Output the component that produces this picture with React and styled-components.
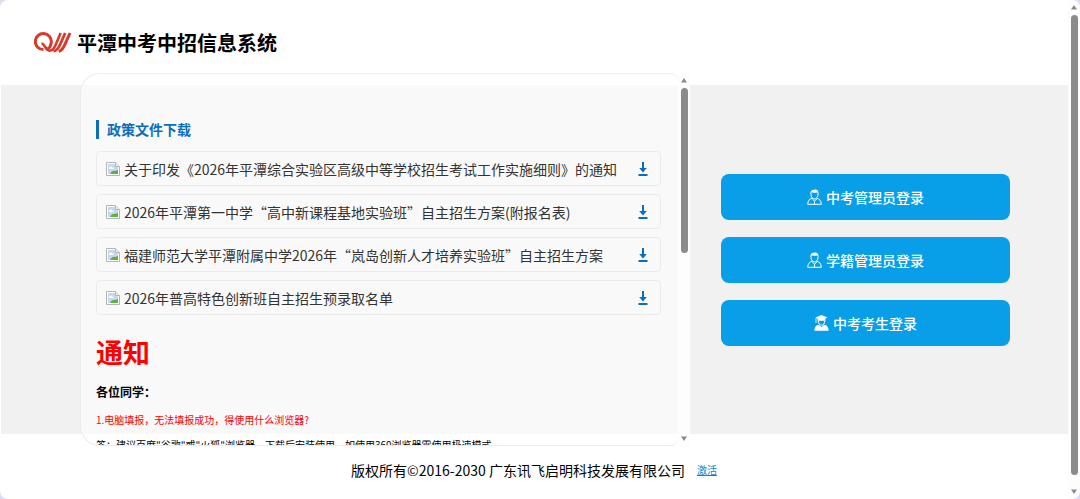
import React from 'react'
import styled, { createGlobalStyle } from 'styled-components'

const files = [
  '关于印发《2026年平潭综合实验区高级中等学校招生考试工作实施细则》的通知',
  '2026年平潭第一中学“高中新课程基地实验班”自主招生方案(附报名表)',
  '福建师范大学平潭附属中学2026年“岚岛创新人才培养实验班”自主招生方案',
  '2026年普高特色创新班自主招生预录取名单',
]

const logins = [
  { text: '中考管理员登录', icon: 'admin' },
  { text: '学籍管理员登录', icon: 'admin' },
  { text: '中考考生登录', icon: 'student' },
]

const Logo = () => (
  <svg width='38' height='22' viewBox='0 0 38 22' aria-hidden='true'>
    <g fill='none' stroke='#d83a2b'>
      <path d='M9.5 18.600A8 8 0 1 1 17.300 11.500C17 14.500 15.600 16.800 13.400 18.400' strokeWidth='3' />
      <path d='M7.500 12.500C11 12.500 11 19.500 15.500 19.700C19.500 19.800 20.500 16.500 21.800 13.500L26.600 2' strokeWidth='2.6' />
      <path d='M19.500 20.400C23.200 19.600 24.600 17 26 13.800L31.200 2' strokeWidth='2.8' />
      <path d='M24.800 20.400C28.200 19.400 29.400 16.800 30.700 13.800L36 2' strokeWidth='3' />
    </g>
  </svg>
)

const BrokenImage = () => (
  <svg width='14' height='14' viewBox='0 0 14 14' aria-hidden='true'>
    <path d='M.5.5h9l4 4v9H.5z' fill='#fff' stroke='#b4b4b4' />
    <path d='M2 2h7.5v3H12v7H2z' fill='#c5d8f2' />
    <path d='M3 6q1.5-2.5 3.5-.5Q8 5.5 8 7H3z' fill='#fff' />
    <path d='M4 12q2-4 5-3l3-1v4z' fill='#5bb13e' />
    <path d='M9.5.5v4h4' fill='#eee' stroke='#b4b4b4' />
  </svg>
)

const DownloadIcon = () => (
  <svg width='10' height='14' viewBox='0 0 10 14' aria-hidden='true'>
    <path d='M5 0v9' stroke='#0a6ebd' strokeWidth='2' />
    <path d='M1.2 6h7.600L5 10.400z' fill='#0a6ebd' />
    <path d='M.5 13h9' stroke='#0a6ebd' strokeWidth='2' />
  </svg>
)

const AdminIcon = () => (
  <svg width='15' height='16' viewBox='0 0 15 16' aria-hidden='true'>
    <g fill='none' stroke='#fff' strokeWidth='1' strokeLinejoin='round'>
      <path d='M4 4.5C3.8 8 5.4 10 7.5 10S11.2 8 11 4.5' />
      <path d='M5.2 9.2C2.5 10 .9 11.5.7 15.3h13.6C14.1 11.5 12.5 10 9.8 9.2' />
      <path d='M5.3 10l2.2 2.2L9.7 10M7.5 12.2v3' />
    </g>
    <path d='M3.6 5.4C3 2.4 4.4.7 7.2.7c3.2-.5 4.8 1.5 4.2 4.7l-.9-1.9C8.5 4 6.5 3.9 4.9 3.3z' fill='#fff' />
  </svg>
)

const StudentIcon = () => (
  <svg width='15' height='16' viewBox='0 0 15 16' aria-hidden='true'>
    <path d='M7.5 0l6 2.6-2.200 1.100v2.100H3.700V3.700L1.500 2.600z' fill='#fff' />
    <path d='M4.200 5.500C4.200 8.600 5.600 10.200 7.500 10.200s3.300-1.600 3.300-4.700' fill='none' stroke='#fff' />
    <path d='M2 3v5' stroke='#fff' strokeWidth='.8' />
    <path d='M4.800 9.800L7.500 12l2.700-2.200c2.800.5 4.200 2.200 4.500 6H.3c.3-3.800 1.700-5.500 4.500-6z' fill='#fff' />
  </svg>
)

const ScrollBar = ({ size }) => (
  <Track aria-hidden='true'>
    <Arrow viewBox='0 0 6 5'>
      <path d='M3 0l3 4.500H0z' />
    </Arrow>
    <Rail>
      <Thumb $size={size} />
    </Rail>
    <Arrow viewBox='0 0 6 5'>
      <path d='M0 .5h6L3 5z' />
    </Arrow>
  </Track>
)

const App = () => {
  return (
    <>
      <GlobalStyle />
      <Shell>
        <Page>
          <Header>
            <Logo />
            <h1>平潭中考中招信息系统</h1>
          </Header>
          <Band>
            <CardBox>
              <Card>
                <CardTitle>政策文件下载</CardTitle>
                <FileList>
                  {files.map((name) => (
                    <FileItem key={name}>
                      <BrokenImage />
                      <span>{name}</span>
                      <DownloadLink href='#' aria-label={`下载 ${name}`}>
                        <DownloadIcon />
                      </DownloadLink>
                    </FileItem>
                  ))}
                </FileList>
                <NoticeTitle>通知</NoticeTitle>
                <Greeting>各位同学：</Greeting>
                <Question>1.电脑填报，无法填报成功，得使用什么浏览器?</Question>
                <Answer>
                  答：建议百度"谷歌"或"火狐"浏览器，下载后安装使用，如使用360浏览器需使用极速模式
                </Answer>
              </Card>
              <ScrollBar size='48%' />
            </CardBox>
            <LoginList>
              {logins.map(({ text, icon }) => (
                <LoginButton type='button' key={text}>
                  {icon === 'admin' ? <AdminIcon /> : <StudentIcon />}
                  {text}
                </LoginButton>
              ))}
            </LoginList>
          </Band>
          <Footer>
            <span>版权所有©2016-2030 广东讯飞启明科技发展有限公司</span>
            <a href='#'>激活</a>
          </Footer>
        </Page>
        <ScrollBar size='98%' />
      </Shell>
    </>
  )
}

const GlobalStyle = createGlobalStyle`
  * {
    box-sizing: border-box;
  }

  body {
    margin: 0;
    background: #dcdcf2;
    color: #000;
    font-family: 'Noto Sans CJK SC', sans-serif;
    font-size: 14px;
  }

  h1, h2, p, ul {
    margin: 0;
    padding: 0;
  }
`

const Shell = styled.div`
  display: flex;
  height: 100vh;
  background: #fff;
  border-radius: 8px;
  overflow: hidden;
`

const Page = styled.div`
  display: flex;
  flex: 1;
  flex-direction: column;
  min-width: 0;
`

const Header = styled.header`
  display: flex;
  align-items: center;
  gap: 5px;
  height: 85px;
  padding-left: 34px;

  svg {
    margin-bottom: 2px;
  }

  h1 {
    font-size: 20px;
    font-weight: 700;
    line-height: 30px;
  }
`

const Band = styled.main`
  display: grid;
  grid-template-columns: 19fr 9fr;
  grid-template-rows: minmax(0, 1fr);
  column-gap: 31px;
  flex: 1;
  min-height: 0;
  margin-left: 1px;
  padding: 0 58px 0 79px;
  background: #f1f1f1;
`

const CardBox = styled.section`
  display: flex;
  min-width: 0;
  margin: -12px 0;
`

const Card = styled.div`
  flex: 1;
  min-width: 0;
  padding: 46px 17px 0 15px;
  border: 1px solid #ececec;
  border-right: 0;
  border-radius: 20px 8px 8px 20px;
  background: rgba(255, 255, 255, 0.6);
  overflow: hidden;
`

const CardTitle = styled.h2`
  margin-bottom: 12px;
  padding-left: 8px;
  border-left: 3px solid #0a6ebd;
  color: #0a6ebd;
  font-size: 14px;
  font-weight: 700;
  line-height: 19px;
`

const FileList = styled.ul`
  display: flex;
  flex-direction: column;
  gap: 8px;
  list-style: none;
`

const FileItem = styled.li`
  display: flex;
  align-items: center;
  gap: 4px;
  height: 35px;
  padding: 0 10px 0 9px;
  border: 1px solid #ebebeb;
  border-radius: 4px;
  color: #333;

  span {
    flex: 1;
    min-width: 0;
    line-height: 20px;
    white-space: nowrap;
  }
`

const DownloadLink = styled.a`
  display: flex;
  padding: 0 2px;
`

const NoticeTitle = styled.h2`
  margin-top: 17px;
  color: #f00;
  font-size: 27px;
  line-height: 40px;
`

const Greeting = styled.p`
  margin-top: 11px;
  font-size: 12px;
  font-weight: 700;
  line-height: 18px;
`

const Question = styled.p`
  margin-top: 11px;
  color: #f00;
  font-size: 10px;
  line-height: 16px;
`

const Answer = styled.p`
  margin-top: 9px;
  font-size: 10px;
  line-height: 16px;
`

const LoginList = styled.nav`
  display: flex;
  flex-direction: column;
  justify-content: center;
  gap: 17px;
`

const LoginButton = styled.button`
  display: flex;
  align-items: center;
  justify-content: center;
  gap: 4px;
  height: 46px;
  padding: 0;
  border: 0;
  border-radius: 8px;
  background: #089fe8;
  color: #fff;
  font-family: inherit;
  font-size: 14px;
  font-weight: 500;
  cursor: pointer;
`

const Footer = styled.footer`
  display: flex;
  align-items: center;
  justify-content: center;
  gap: 12px;
  height: 65px;
  padding-top: 6px;

  a {
    color: #1683c9;
    font-size: 10px;
  }
`

const Track = styled.div`
  display: flex;
  flex-direction: column;
  align-items: center;
  gap: 5px;
  width: 12px;
  padding: 5px 0;
  background: #fdfdfd;
`

const Arrow = styled.svg`
  width: 6px;
  height: 5px;
  fill: #8b8b8b;
`

const Rail = styled.div`
  flex: 1;
  width: 7px;
`

const Thumb = styled.div`
  height: ${(props) => props.$size};
  border-radius: 4px;
  background: #8b8b8b;
`

export default App
